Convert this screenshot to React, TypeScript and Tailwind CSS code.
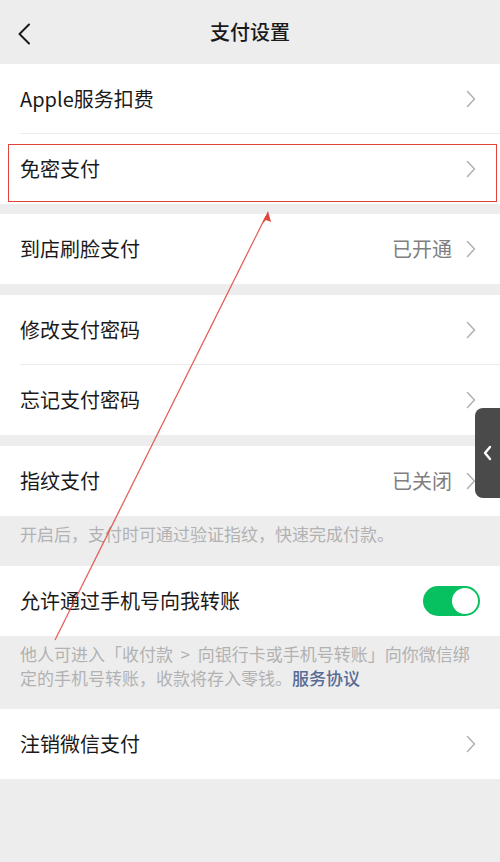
import React from "react";

const font = { fontFamily: '"Noto Sans CJK SC", "Noto Sans", sans-serif' };

function Chevron() {
  return (
    <svg width="10" height="18" viewBox="0 0 10 18" className="shrink-0">
      <path d="M1.5 1.5 L8.5 9 L1.5 16.5" fill="none" stroke="#b2b2b2" strokeWidth="1.6" strokeLinecap="round" strokeLinejoin="round" />
    </svg>
  );
}

function Row({ label, value, divider, chevron = true, children }: { label: string; value?: string; divider?: boolean; chevron?: boolean; children?: React.ReactNode }) {
  return (
    <div className="relative flex h-[70px] items-center pl-5 pr-6">
      <span className="flex-1 text-[20px] text-[#1a1a1a]">{label}</span>
      {value && <span className="mr-[14px] text-[20px] text-[#7f7f7f]">{value}</span>}
      {chevron && <Chevron />}
      {children}
      {divider && <div className="absolute bottom-0 left-5 right-0 h-px bg-[#ececec]" />}
    </div>
  );
}

export default function App() {
  return (
    <div style={font} className="relative h-[862px] w-[500px] overflow-hidden bg-[#ededed]">
      <div className="relative flex h-16 items-center justify-center">
        <svg width="14" height="22" viewBox="0 0 14 22" className="absolute left-[17px] top-[23px]">
          <path d="M12 1.5 L2.5 11 L12 20.5" fill="none" stroke="#1a1a1a" strokeWidth="2" strokeLinecap="round" strokeLinejoin="round" />
        </svg>
        <span className="text-[20px] font-medium text-[#1a1a1a]">支付设置</span>
      </div>

      <div className="bg-white">
        <Row label="Apple服务扣费" divider />
        <Row label="免密支付" />
      </div>
      <div className="mt-[10px] bg-white">
        <Row label="到店刷脸支付" value="已开通" />
      </div>
      <div className="mt-[11px] bg-white">
        <Row label="修改支付密码" divider />
        <Row label="忘记支付密码" />
      </div>
      <div className="mt-[11px] bg-white">
        <Row label="指纹支付" value="已关闭" />
      </div>
      <div className="px-5 pb-[20px] pt-[6px] text-[17px] leading-[24px] text-[#b2b2b2]">开启后，支付时可通过验证指纹，快速完成付款。</div>
      <div className="bg-white">
        <div className="flex h-[70px] items-center pl-5 pr-5">
          <span className="flex-1 text-[20px] text-[#1a1a1a]">允许通过手机号向我转账</span>
          <div className="flex h-[30px] w-[57px] items-center justify-end rounded-full bg-[#07c160] pr-[2px]">
            <div className="h-[26px] w-[26px] rounded-full bg-white" />
          </div>
        </div>
      </div>
      <div className="px-5 pb-[19px] pt-[6px] text-[17px] leading-[24px] text-[#b2b2b2]">
        <div className="whitespace-nowrap">他人可进入「收付款&nbsp;&nbsp;&gt;&nbsp;&nbsp;向银行卡或手机号转账」向你微信绑</div>
        <div>定的手机号转账，收款将存入零钱。<span className="font-medium text-[#576b95]">服务协议</span></div>
      </div>
      <div className="bg-white">
        <Row label="注销微信支付" />
      </div>

      {/* side floating tab */}
      <div className="absolute left-[475px] top-[408px] flex h-[90px] w-[30px] items-center justify-start rounded-l-[8px] bg-[#4a4a4a] pl-[7px]">
        <svg width="10" height="16" viewBox="0 0 10 16">
          <path d="M8 2 L3 8 L8 14" fill="none" stroke="#ffffff" strokeWidth="2.4" strokeLinecap="round" strokeLinejoin="round" />
        </svg>
      </div>

      {/* annotation */}
      <div className="pointer-events-none absolute left-[8px] top-[144px] h-[58px] w-[489px] border-[1.5px] border-[#e0453b]" />
      <svg className="pointer-events-none absolute left-0 top-0" width="500" height="862" viewBox="0 0 500 862">
        <line x1="55" y1="640" x2="266" y2="216" stroke="#e0453b" strokeWidth="1.3" strokeOpacity="0.85" />
        <path d="M268 211 L262 224 L266 220 L271 222 Z" fill="#e0453b" />
      </svg>
    </div>
  );
}
